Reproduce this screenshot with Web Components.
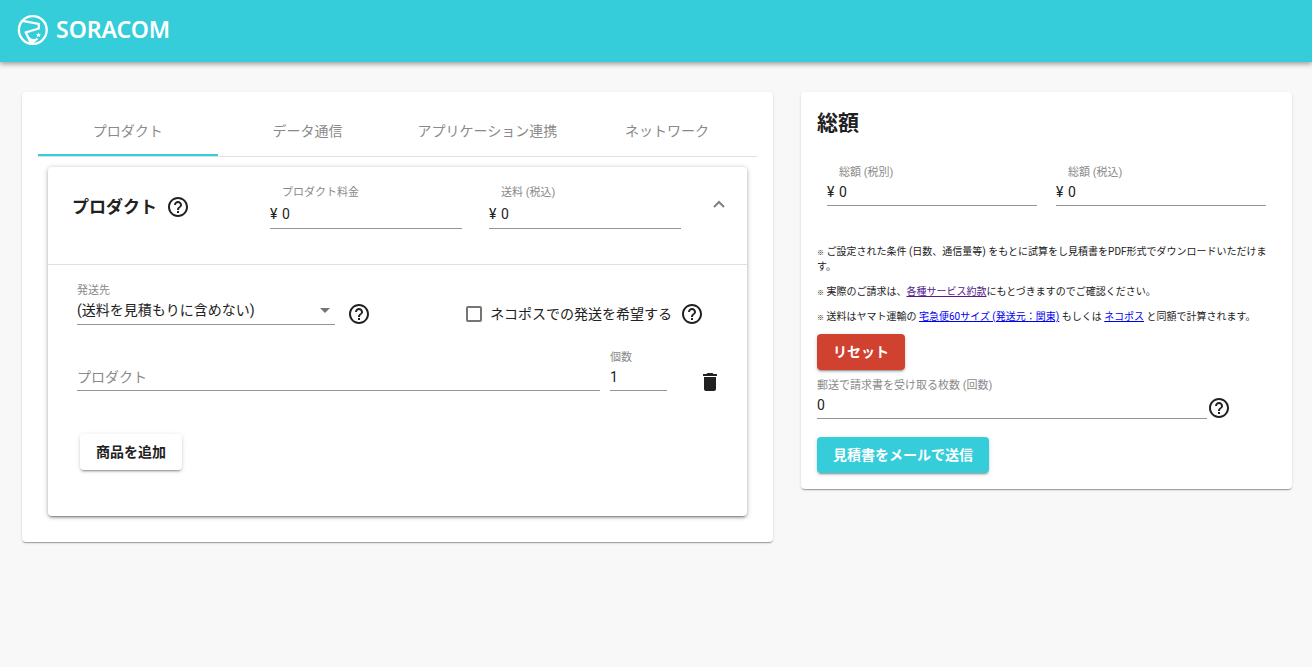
<!DOCTYPE html>
<html lang="ja">
<head>
<meta charset="utf-8">
<title>SORACOM 見積もり</title>
<style>
  body {
    margin: 0;
    background: #f8f8f8;
    color: #212121;
    font: 14px/24px Roboto, "Noto Sans CJK JP", sans-serif;
    --accent: #35cdda;
    --muted: #8a8a8a;
    --line: #949494;
  }
</style>
</head>
<body>
<estimate-app></estimate-app>

<script>
function define(name, html, setup) {
  const template = document.createElement('template');
  template.innerHTML = html;
  customElements.define(name, class extends HTMLElement {
    constructor() {
      super();
      this.attachShadow({ mode: 'open' }).append(template.content.cloneNode(true));
    }
    connectedCallback() {
      if (setup) setup(this, this.shadowRoot);
    }
  });
}

define('app-header', `
  <style>
    :host { display: block; position: relative; background: var(--accent); box-shadow: 0 2px 5px rgba(0,0,0,.38); }
    header { display: flex; align-items: center; height: 62px; padding: 0 16px; box-sizing: border-box; }
    a { display: flex; align-items: center; gap: 8px; color: #fff; text-decoration: none; font: 600 23px/30px "Noto Sans", sans-serif; margin-bottom: 2px; }
    span { padding-bottom: 2px; }
    svg { display: block; }
  </style>
  <header>
    <a href="#">
      <svg width="32" height="32" viewBox="0 0 32 32" fill="none" stroke="#fff" aria-hidden="true">
        <circle cx="16.8" cy="16" r="13.900" stroke-width="2.300"/>
        <path d="M6.500 6.800 L22.800 10 L22.800 14.500 L9.800 18.500 L15 29.500 L21.500 24.500" stroke-width="2.200"/>
        <path d="M11.500 21.500 L15 30 L20 25.500 L15 24.500 Z" fill="#fff" stroke="none"/>
        <path d="M22.500 18.500 L23.300 20.200 L25.100 20.300 L23.700 21.500 L24.200 23.300 L22.500 22.300 L20.800 23.300 L21.300 21.500 L19.900 20.300 L21.700 20.200 Z" fill="#fff" stroke="none"/>
      </svg>
      <span>SORACOM</span>
    </a>
  </header>`);

define('ui-card', `
  <style>
    :host { display: block; background: #fff; border-radius: 4px; padding: 16px; box-shadow: 0 2px 1px -1px rgba(0,0,0,.2), 0 1px 1px rgba(0,0,0,.14), 0 1px 3px rgba(0,0,0,.12); }
  </style>
  <slot></slot>`);

define('ui-tabs', `
  <style>
    :host { display: block; }
    div { display: grid; grid-template-columns: repeat(4, 1fr); border-bottom: 1px solid #e0e0e0; }
    button { height: 48px; border: 0; border-bottom: 2px solid transparent; padding: 0; background: none; font: inherit; color: var(--muted); cursor: pointer; }
    button[aria-selected="true"] { border-color: var(--accent); }
  </style>
  <div role="tablist">
    <button role="tab" aria-selected="true">プロダクト</button>
    <button role="tab" aria-selected="false">データ通信</button>
    <button role="tab" aria-selected="false">アプリケーション連携</button>
    <button role="tab" aria-selected="false">ネットワーク</button>
  </div>`);

define('help-button', `
  <style>
    :host { display: block; width: 24px; height: 24px; flex: none; }
    button { display: block; padding: 0; border: 0; background: none; color: inherit; cursor: pointer; }
    svg { display: block; fill: currentColor; }
  </style>
  <button aria-label="ヘルプ"><svg width="24" height="24" viewBox="0 0 24 24"><path d="M11 18h2v-2h-2v2zm1-16C6.480 2 2 6.480 2 12s4.480 10 10 10 10-4.480 10-10S17.520 2 12 2zm0 18c-4.410 0-8-3.590-8-8s3.590-8 8-8 8 3.590 8 8-3.590 8-8 8zm0-14c-2.210 0-4 1.790-4 4h2c0-1.100.9-2 2-2s2 .9 2 2c0 2-3 1.750-3 5h2c0-2.250 3-2.500 3-5 0-2.210-1.790-4-4-4z"/></svg></button>`);

define('ui-field', `
  <style>
    :host { display: block; min-width: 0; }
    .field { display: grid; grid-template-columns: auto 1fr; border-bottom: 1px solid var(--line); padding-bottom: 1px; }
    label { grid-column: 2; height: 16px; font-size: 11px; line-height: 18px; color: var(--muted); white-space: nowrap; }
    .prefix { grid-column: 1; grid-row: 2; }
    :host([prefix]) .prefix { width: 12px; }
    input { grid-column: 2; grid-row: 2; width: 100%; min-width: 0; height: 24px; box-sizing: border-box; padding: 0; border: 0; outline: 0; background: none; font: inherit; color: inherit; }
    input::placeholder { color: var(--muted); opacity: 1; }
    :host([roomy]) .field { row-gap: 2px; padding-bottom: 2px; }
  </style>
  <div class="field">
    <label for="control"></label>
    <span class="prefix"></span>
    <input id="control" type="text">
  </div>`, (host, root) => {
    const input = root.querySelector('input');
    root.querySelector('label').textContent = host.getAttribute('label') || '';
    root.querySelector('.prefix').textContent = host.getAttribute('prefix') || '';
    input.value = host.getAttribute('value') || '';
    input.placeholder = host.getAttribute('placeholder') || '';
    if (!host.hasAttribute('label')) input.setAttribute('aria-label', input.placeholder);
  });

define('destination-select', `
  <style>
    :host { display: block; }
    label { display: block; height: 16px; font-size: 11px; line-height: 18px; color: var(--muted); }
    div { display: grid; align-items: center; border-bottom: 1px solid var(--line); padding-bottom: 2px; }
    select, svg { grid-area: 1 / 1; }
    select { appearance: none; width: 100%; height: 24px; padding: 0; border: 0; outline: 0; background: none; font: inherit; color: inherit; }
    svg { justify-self: end; margin-right: 5px; pointer-events: none; }
  </style>
  <label for="to">発送先</label>
  <div>
    <select id="to"><option>(送料を見積もりに含めない)</option></select>
    <svg width="10" height="5" viewBox="0 0 10 5"><path d="M0 0h10L5 5z" fill="#757575"/></svg>
  </div>`);

define('ui-check', `
  <style>
    :host { display: block; }
    label { display: flex; align-items: center; gap: 8px; white-space: nowrap; }
    input { appearance: none; width: 16px; height: 16px; box-sizing: border-box; margin: 0; border: 2px solid #757575; border-radius: 2px; }
    input:checked { background: var(--accent); border-color: var(--accent); }
  </style>
  <label><input type="checkbox"><span><slot></slot></span></label>`);

define('ui-button', `
  <style>
    :host { display: block; }
    button { display: block; height: 36px; padding: 0 16px; border: 0; border-radius: 4px; background: #fff; color: #212121; font: inherit; font-weight: 700; white-space: nowrap; cursor: pointer; box-shadow: 0 3px 1px -2px rgba(0,0,0,.2), 0 2px 2px rgba(0,0,0,.14), 0 1px 5px rgba(0,0,0,.12); }
    :host([kind="danger"]) button { background: #d0422f; color: #fff; }
    :host([kind="primary"]) button { background: var(--accent); color: #fff; }
  </style>
  <button type="button"><slot></slot></button>`);

define('product-panel', `
  <style>
    :host { display: block; border-radius: 4px; background: #fff; box-shadow: 0 3px 1px -2px rgba(0,0,0,.2), 0 2px 2px rgba(0,0,0,.14), 0 1px 5px rgba(0,0,0,.3); }
    .head { display: grid; grid-template-columns: 171fr 192fr 192fr 22px; column-gap: 27px; align-items: start; padding: 17px 17px 35px 24px; border-bottom: 1px solid #e0e0e0; }
    .title { display: flex; align-items: center; gap: 9px; padding-top: 11px; }
    h2 { margin: 0; font-size: 17px; line-height: 24px; white-space: nowrap; }
    button { padding: 0; border: 0; background: none; color: inherit; cursor: pointer; }
    svg { display: block; }
    .toggle { display: flex; justify-content: center; padding-top: 16px; }
    .body { padding: 17px 25px 46px 29px; }
    .shipping { display: flex; align-items: flex-start; }
    .shipping destination-select { flex: 0 1 40%; margin-right: 12px; }
    .option { display: flex; align-items: center; gap: 8px; margin-left: auto; margin-right: 18px; padding-top: 20px; }
    .shipping > help-button { padding-top: 20px; }
    .item { display: grid; grid-template-columns: 1fr 57px 55px; column-gap: 10px; align-items: start; margin: 23px -10px 40px 0; }
    .item button { padding: 21px 0 0 21px; }
    .add { display: flex; padding-left: 3px; }
  </style>
  <section>
    <div class="head">
      <div class="title"><h2>プロダクト</h2><help-button></help-button></div>
      <ui-field roomy label="プロダクト料金" prefix="¥" value="0"></ui-field>
      <ui-field roomy label="送料 (税込)" prefix="¥" value="0"></ui-field>
      <button class="toggle" aria-label="閉じる"><svg width="12" height="8" viewBox="0 0 12 8" fill="none" stroke="#808080" stroke-width="2"><path d="M1 7l5-5 5 5"/></svg></button>
    </div>
    <div class="body">
      <div class="shipping">
        <destination-select></destination-select>
        <help-button></help-button>
        <div class="option"><ui-check>ネコポスでの発送を希望する</ui-check><help-button></help-button></div>
      </div>
      <div class="item">
        <ui-field placeholder="プロダクト"></ui-field>
        <ui-field label="個数" value="1"></ui-field>
        <button aria-label="削除"><svg width="24" height="24" viewBox="0 0 24 24" fill="#212121"><path d="M6 19c0 1.100.9 2 2 2h8c1.100 0 2-.9 2-2V7H6v12zM19 4h-3.500l-1-1h-5l-1 1H5v2h14V4z"/></svg></button>
      </div>
      <div class="add"><ui-button>商品を追加</ui-button></div>
    </div>
  </section>`);

define('estimate-notes', `
  <style>
    :host { display: block; font-size: 10px; line-height: 15px; }
    p { margin: 0 0 10px; }
    span { font-size: 7px; font-weight: 700; line-height: 7px; }
    a { color: #0000ee; }
    a.seen { color: #551a8b; }
  </style>
  <p><span>※</span> ご設定された条件 (日数、通信量等) をもとに試算をし見積書をPDF形式でダウンロードいただけます。</p>
  <p><span>※</span> 実際のご請求は、<a class="seen" href="#terms">各種サービス約款</a>にもとづきますのでご確認ください。</p>
  <p><span>※</span> 送料はヤマト運輸の <a href="#takkyubin">宅急便60サイズ (発送元：関東)</a> もしくは <a href="#nekopos">ネコポス</a> と同額で計算されます。</p>`);

define('total-summary', `
  <style>
    :host { display: block; }
    h1 { margin: 0; font-size: 21px; line-height: 30px; }
    .totals { display: grid; grid-template-columns: 1fr 1fr; column-gap: 19px; margin: 26px 10px 38px; }
    .mail { display: flex; align-items: flex-start; margin: 7px 45px 17px 0; }
    .mail ui-field { flex: 1; }
    .mail help-button { padding-top: 19px; }
  </style>
  <h1>総額</h1>
  <div class="totals">
    <ui-field label="総額 (税別)" prefix="¥" value="0"></ui-field>
    <ui-field label="総額 (税込)" prefix="¥" value="0"></ui-field>
  </div>
  <estimate-notes></estimate-notes>
  <ui-button kind="danger">リセット</ui-button>
  <div class="mail">
    <ui-field label="郵送で請求書を受け取る枚数 (回数)" value="0"></ui-field>
    <help-button></help-button>
  </div>
  <ui-button kind="primary">見積書をメールで送信</ui-button>`);

define('estimate-app', `
  <style>
    :host { display: block; }
    main { display: grid; grid-template-columns: 26fr 17fr; column-gap: 28px; align-items: start; padding: 30px 20px 30px 22px; }
    product-panel { margin: 10px; }
  </style>
  <app-header></app-header>
  <main>
    <ui-card><ui-tabs></ui-tabs><product-panel></product-panel></ui-card>
    <ui-card><total-summary></total-summary></ui-card>
  </main>`);
</script>
</body>
</html>
